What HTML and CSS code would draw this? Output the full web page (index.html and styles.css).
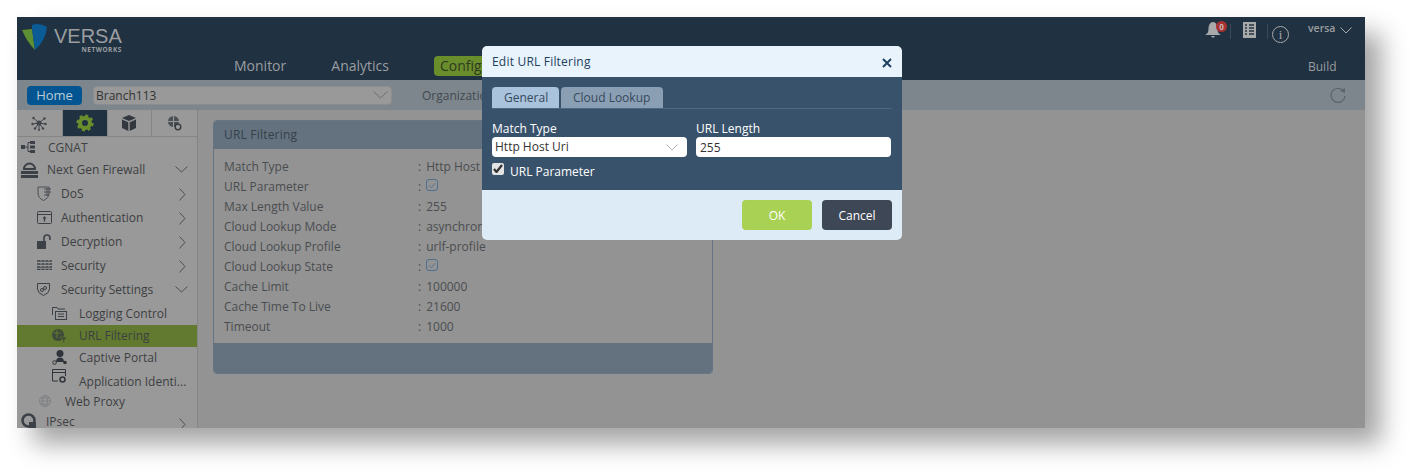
FILE: index.html
```html
<!DOCTYPE html>
<html lang="en">

<head>
    <meta charset="UTF-8">
    <title>Edit URL Filtering</title>
    <link rel="stylesheet" href="styles.css">
</head>

<body>
    <div class="window">
        <header class="topbar">
            <div class="logo">
                <svg width="26" height="29" viewBox="0 0 26 29">
                    <path d="M0 8 L10 7 L13 28 Q5 20 0 8 Z" fill="#5f8f33"/>
                    <path d="M10 3 Q17 0 25 5 Q24 18 13 28 L10 7 Z" fill="#0b5c96"/>
                </svg>
                <div class="logo-text">
                    <span class="logo-name">VERSA</span>
                    <span class="logo-sub">NETWORKS</span>
                </div>
            </div>
            <nav class="mainnav">
                <a>Monitor</a>
                <a>Analytics</a>
                <a class="active">Configuration</a>
            </nav>
            <div class="topright">
                <div class="topicons">
                    <span class="bell">
                        <svg width="16" height="17" viewBox="0 0 16 17"><path d="M8 0 C11.500 0 12.500 4 12.500 7 C12.500 10 13.500 12 16 13 L0 13 C2.500 12 3.500 10 3.500 7 C3.500 4 4.500 0 8 0 Z M6 14 L10 14 Q8 17.500 6 14 Z" fill="#a7a9ab"/></svg>
                        <b class="badge">0</b>
                    </span>
                    <i class="sep"></i>
                    <svg class="listicon" width="13" height="16" viewBox="0 0 13 16"><rect width="13" height="16" fill="#a7a9ab"/><path d="M2 3H4M6 3H11M2 6H4M6 6H11M2 9H4M6 9H11M2 12H4M6 12H11" stroke="#27343f" stroke-width="1.300"/></svg>
                    <i class="sep"></i>
                    <span class="infoicon">i</span>
                    <span class="user">versa</span>
                    <svg class="userchev" width="12" height="7" viewBox="0 0 12 7"><path d="M0.500 0.500 L6 6 L11.500 0.500" fill="none" stroke="#a7a9ab"/></svg>
                </div>
                <div class="build">Build</div>
            </div>
        </header>

        <div class="toolbar">
            <button class="home">Home</button>
            <div class="branch">
                <span>Branch113</span>
                <svg width="15" height="8" viewBox="0 0 15 8"><path d="M0.500 0.500 L7.500 7 L14.500 0.500" fill="none" stroke="#6b6f73"/></svg>
            </div>
            <span class="org">Organization</span>
            <svg class="refresh" width="16" height="16" viewBox="0 0 16 16"><path d="M12.500 3 A7 7 0 1 0 15 9" fill="none" stroke="#5c6369" stroke-width="1.200"/><path d="M10 4 L15 1 L15 6 Z" fill="#5c6369"/></svg>
        </div>

        <div class="content">
            <aside class="sidebar">
                <div class="sidetabs">
                    <div class="sidetab">
                        <svg width="16" height="16" viewBox="0 0 16 16"><path d="M8 8L2.500 3M8 8L13.500 3.500M8 8L1.500 9M8 8L14.500 9M8 8L4 13.500M8 8L12 13.500M8 8L8 15" stroke="#40464b"/><g fill="#40464b"><circle cx="8" cy="8" r="2.500"/><circle cx="2.500" cy="3" r="1.200"/><circle cx="13.500" cy="3.500" r="1.200"/><circle cx="1.500" cy="9" r="1.200"/><circle cx="14.500" cy="9" r="1.200"/><circle cx="4" cy="13.500" r="1.200"/><circle cx="12" cy="13.500" r="1.200"/><circle cx="8" cy="15" r="1"/></g></svg>
                    </div>
                    <div class="sidetab current">
                        <svg width="18" height="18" viewBox="0 0 18 18"><circle cx="9" cy="9" r="5" fill="none" stroke="#6b8e2d" stroke-width="4"/><circle cx="9" cy="9" r="7.400" fill="none" stroke="#6b8e2d" stroke-width="2.400" stroke-dasharray="3 2.800"/></svg>
                    </div>
                    <div class="sidetab">
                        <svg width="14" height="16" viewBox="0 0 14 16"><path d="M7 0L14 3L7 6L0 3ZM0 4.500L6.300 7.200V16L0 13ZM14 4.500L7.700 7.200V16L14 13Z" fill="#32383d"/></svg>
                    </div>
                    <div class="sidetab">
                        <svg width="15" height="16" viewBox="0 0 15 16"><circle cx="6.500" cy="6.500" r="5.500" fill="#4a5055"/><path d="M1 6.500H12M6.500 1V12" stroke="#999"/><circle cx="11" cy="12" r="2.800" fill="#999" stroke="#32383d" stroke-width="1.300"/></svg>
                    </div>
                </div>
                <ul class="tree">
                    <li class="row lvl0 h-cgnat">
                        <svg class="ic" width="15" height="14" viewBox="0 0 15 14"><path d="M0 5H4V9H0ZM9 1H14V4H9ZM9 5.500H14V8.500H9ZM9 10H14V13H9Z" fill="#3b4147"/><path d="M4 7H7M7 2.500V11.500H9M7 2.500H9" stroke="#3b4147" fill="none"/></svg>
                        <span class="label gap-cgnat">CGNAT</span>
                    </li>
                    <li class="row lvl0 h-ngf">
                        <svg class="ic" width="17" height="17" viewBox="0 0 17 17"><path d="M3 8 A5.500 5.500 0 0 1 14 8 Z" fill="none" stroke="#3b4147" stroke-width="2"/><path d="M0 10H17V13H0ZM0 14H17V17H0Z" fill="#3b4147"/></svg>
                        <span class="label gap-ngf">Next Gen Firewall</span>
                        <svg class="chev-down" width="13" height="7" viewBox="0 0 13 7"><path d="M0.500 0.500L6.500 6L12.500 0.500" fill="none" stroke="#4a4f54"/></svg>
                    </li>
                    <li class="row lvl1">
                        <svg class="ic" width="15" height="15" viewBox="0 0 15 15"><path d="M1 1H12V7Q12 12 6.500 14.500Q1 12 1 7Z" fill="none" stroke="#4a4f54"/><path d="M7 3H14M7 6H14M7 9H12M10 2V10" stroke="#4a4f54" fill="none"/></svg>
                        <span class="label">DoS</span>
                        <svg class="chev-right" width="7" height="13" viewBox="0 0 7 13"><path d="M0.500 0.500L6 6.500L0.500 12.500" fill="none" stroke="#4a4f54"/></svg>
                    </li>
                    <li class="row lvl1">
                        <svg class="ic" width="15" height="13" viewBox="0 0 15 13"><rect x="0.500" y="0.500" width="14" height="12" rx="1" fill="none" stroke="#3b4147"/><path d="M0.500 3.500H14.500" stroke="#3b4147"/><path d="M7.500 5L9.500 7.500H8.200V10.500H6.800V7.500H5.500Z" fill="#3b4147"/></svg>
                        <span class="label">Authentication</span>
                        <svg class="chev-right" width="7" height="13" viewBox="0 0 7 13"><path d="M0.500 0.500L6 6.500L0.500 12.500" fill="none" stroke="#4a4f54"/></svg>
                    </li>
                    <li class="row lvl1">
                        <svg class="ic" width="15" height="15" viewBox="0 0 15 15"><rect x="0" y="7" width="9" height="8" fill="#3b4147"/><path d="M7 7V4A3 3 0 0 1 13 4V6" fill="none" stroke="#3b4147" stroke-width="1.600"/></svg>
                        <span class="label">Decryption</span>
                        <svg class="chev-right" width="7" height="13" viewBox="0 0 7 13"><path d="M0.500 0.500L6 6.500L0.500 12.500" fill="none" stroke="#4a4f54"/></svg>
                    </li>
                    <li class="row lvl1">
                        <svg class="ic" width="15" height="10" viewBox="0 0 15 10"><path d="M0 1H15M0 4H15M0 7H15M0 9.500H15" stroke="#3b4147" stroke-width="1.500"/><path d="M4 0V10M8 0V10M12 0V10" stroke="#999" stroke-dasharray="1.500 1.500"/></svg>
                        <span class="label">Security</span>
                        <svg class="chev-right" width="7" height="13" viewBox="0 0 7 13"><path d="M0.500 0.500L6 6.500L0.500 12.500" fill="none" stroke="#4a4f54"/></svg>
                    </li>
                    <li class="row lvl1">
                        <svg class="ic" width="13" height="14" viewBox="0 0 13 14"><path d="M0.500 1.500H12.500V7Q12.500 11 6.500 13.500Q0.500 11 0.500 7Z" fill="none" stroke="#3b4147"/><circle cx="5" cy="8" r="1.500" fill="none" stroke="#3b4147"/><circle cx="8" cy="6" r="1.500" fill="none" stroke="#3b4147"/></svg>
                        <span class="label gap-sec">Security Settings</span>
                        <svg class="chev-down" width="13" height="7" viewBox="0 0 13 7"><path d="M0.500 0.500L6.500 6L12.500 0.500" fill="none" stroke="#4a4f54"/></svg>
                    </li>
                    <li class="row lvl2 r-log">
                        <svg class="ic" width="15" height="14" viewBox="0 0 15 14"><path d="M0.500 9V1.500H5L6 3H13" fill="none" stroke="#3b4147"/><rect x="3.500" y="5.500" width="11" height="8" fill="none" stroke="#3b4147"/><path d="M6 8H12M6 10.500H12" stroke="#3b4147"/></svg>
                        <span class="label">Logging Control</span>
                    </li>
                    <li class="row lvl2 selected">
                        <svg class="ic" width="15" height="14" viewBox="0 0 15 14"><circle cx="6" cy="6" r="6" fill="#3f4a3a"/><path d="M2 4H9M5 1V9" stroke="#617a2f"/><path d="M8 8H15L12.500 11V14H11V11Z" fill="#3f4a3a" stroke="#617a2f" stroke-width="0.600"/></svg>
                        <span class="label">URL Filtering</span>
                    </li>
                    <li class="row lvl2 r-captive">
                        <svg class="ic" width="15" height="15" viewBox="0 0 15 15"><circle cx="8" cy="3.500" r="3.500" fill="#2f353a"/><path d="M4 12Q4 7.500 8 7.500Q12 7.500 12 12Z" fill="#2f353a"/><circle cx="2.500" cy="12.500" r="1.800" fill="none" stroke="#2f353a"/><circle cx="13" cy="12.500" r="1.800" fill="#2f353a"/></svg>
                        <span class="label">Captive Portal</span>
                    </li>
                    <li class="row lvl2 r-app">
                        <svg class="ic ic-up" width="14" height="14" viewBox="0 0 14 14"><path d="M0.500 12V0.500H13.500V7M0.500 3.500H13.500M0.500 12H6" fill="none" stroke="#2f353a"/><circle cx="10.500" cy="10.500" r="2.500" fill="none" stroke="#2f353a" stroke-width="1.500"/></svg>
                        <span class="label">Application Identi...</span>
                    </li>
                    <li class="row lvlw">
                        <svg class="ic" width="12" height="12" viewBox="0 0 12 12"><g fill="none" stroke="#808285"><circle cx="6" cy="6" r="5.500"/><ellipse cx="6" cy="6" rx="2.500" ry="5.500"/><path d="M0.500 6H11.500M1.500 3H10.500M1.500 9H10.500"/></g></svg>
                        <span class="label">Web Proxy</span>
                    </li>
                    <li class="row lvl0 r-ipsec">
                        <svg class="ic" width="16" height="16" viewBox="0 0 16 16"><circle cx="7.500" cy="7.500" r="6" fill="none" stroke="#3b4147" stroke-width="2.500"/><rect x="8" y="9" width="7" height="7" fill="#3b4147"/></svg>
                        <span class="label gap-ipsec">IPsec</span>
                        <svg class="chev-right" width="7" height="13" viewBox="0 0 7 13"><path d="M0.500 0.500L6 6.500L0.500 12.500" fill="none" stroke="#4a4f54"/></svg>
                    </li>
                </ul>
            </aside>

            <main class="main">
                <section class="panel">
                    <h3 class="panel-head">URL Filtering</h3>
                    <dl class="panel-body">
                        <div class="kv"><dt>Match Type</dt><dd>Http Host Uri</dd></div>
                        <div class="kv"><dt>URL Parameter</dt><dd><span class="tick"><svg width="11" height="9" viewBox="0 0 11 9"><path d="M2 4.500L4.500 7L9 2" fill="none" stroke="#4d7199"/></svg></span></dd></div>
                        <div class="kv"><dt>Max Length Value</dt><dd>255</dd></div>
                        <div class="kv"><dt>Cloud Lookup Mode</dt><dd>asynchronous</dd></div>
                        <div class="kv"><dt>Cloud Lookup Profile</dt><dd>urlf-profile</dd></div>
                        <div class="kv"><dt>Cloud Lookup State</dt><dd><span class="tick"><svg width="11" height="9" viewBox="0 0 11 9"><path d="M2 4.500L4.500 7L9 2" fill="none" stroke="#4d7199"/></svg></span></dd></div>
                        <div class="kv"><dt>Cache Limit</dt><dd>100000</dd></div>
                        <div class="kv"><dt>Cache Time To Live</dt><dd>21600</dd></div>
                        <div class="kv"><dt>Timeout</dt><dd>1000</dd></div>
                    </dl>
                    <div class="panel-foot"></div>
                </section>
            </main>
        </div>

        <div class="modal">
            <div class="modal-head">
                <span>Edit URL Filtering</span>
                <svg width="10" height="10" viewBox="0 0 10 10"><path d="M1 1L9 9M9 1L1 9" stroke="#1f3f5c" stroke-width="2"/></svg>
            </div>
            <div class="modal-body">
                <div class="tabs">
                    <span class="tab on">General</span>
                    <span class="tab">Cloud Lookup</span>
                </div>
                <div class="fields">
                    <div class="field">
                        <label>Match Type</label>
                        <div class="input select">
                            <span>Http Host Uri</span>
                            <svg width="12" height="7" viewBox="0 0 12 7"><path d="M0.500 0.500L6 6L11.500 0.500" fill="none" stroke="#b5b5b5"/></svg>
                        </div>
                    </div>
                    <div class="field">
                        <label>URL Length</label>
                        <div class="input length">255</div>
                    </div>
                </div>
                <div class="checkrow">
                    <span class="checkbox"><svg width="10" height="9" viewBox="0 0 10 9"><path d="M1 5L3.500 8L9 1" fill="none" stroke="#333" stroke-width="2.200"/></svg></span>
                    <span>URL Parameter</span>
                </div>
            </div>
            <div class="modal-foot">
                <button class="btn ok">OK</button>
                <button class="btn cancel">Cancel</button>
            </div>
        </div>
    </div>
</body>

</html>
```

FILE: styles.css
```css
* {
    margin: 0;
    padding: 0;
    box-sizing: border-box;
}

body {
    background: #fff;
    height: 476px;
    overflow: hidden;
    padding: 17px 48px 48px 17px;
    font-family: "Open Sans", sans-serif;
    font-size: 12px;
    color: #3c4044;
}

.window {
    position: relative;
    width: 1348px;
    height: 411px;
    display: flex;
    flex-direction: column;
    background: #939393;
    box-shadow: 16px 16px 24px rgba(0, 0, 0, 0.36);
}

/* top bar */
.topbar {
    height: 63px;
    background: #203141;
    display: flex;
    justify-content: space-between;
    flex: none;
}

.logo {
    width: 217px;
    display: flex;
    align-items: flex-start;
    padding: 5px 0 0 5px;
}

.logo-text {
    display: flex;
    flex-direction: column;
    align-items: flex-end;
    margin-left: 6px;
    color: #9a9da0;
}

.logo-name {
    font-family: "Liberation Sans", sans-serif;
    font-size: 20px;
    line-height: 22px;
    margin-top: 3px;
}

.logo-sub {
    font-size: 6.5px;
    font-weight: 700;
    line-height: 6px;
    letter-spacing: 0.5px;
    margin-top: 0;
}

.mainnav {
    flex: 1;
    display: flex;
    align-items: flex-end;
    gap: 45px;
    padding-bottom: 4px;
    font-size: 14px;
    color: #9a9da0;
}

.mainnav a {
    line-height: 20px;
}

.mainnav .active {
    background: #6b8e2d;
    color: #2d3a20;
    border-radius: 4px;
    padding: 0 6px;
}

.topright {
    width: 160px;
    display: flex;
    flex-direction: column;
    justify-content: space-between;
    padding-bottom: 4px;
}

.topicons {
    display: flex;
    align-items: flex-start;
    padding-top: 5px;
    height: 30px;
}

.bell {
    position: relative;
    height: 17px;
}

.badge {
    position: absolute;
    top: -1px;
    left: 11px;
    width: 11px;
    height: 11px;
    border-radius: 50%;
    background: #a83232;
    color: #c9b5b5;
    font-size: 8px;
    line-height: 11px;
    text-align: center;
}

.sep {
    width: 1px;
    height: 15px;
    background: #3a4a58;
    margin: 2px 0 0 9px;
}

.listicon {
    margin-left: 12px;
}

.listicon + .sep {
    margin-left: 11px;
}

.infoicon {
    width: 17px;
    height: 17px;
    margin: 4px 0 0 4px;
    border: 1px solid #a7a9ab;
    border-radius: 50%;
    color: #a7a9ab;
    font-family: "Liberation Serif", serif;
    font-size: 13px;
    line-height: 15px;
    text-align: center;
}

.user {
    margin-left: 19px;
    font-size: 10.5px;
    font-weight: 600;
    line-height: 13px;
    color: #9a9da0;
}

.userchev {
    margin: 5px 0 0 5px;
}

.build {
    padding-left: 103px;
    font-size: 12px;
    line-height: 18px;
    color: #9a9da0;
}

/* toolbar */
.toolbar {
    height: 30px;
    flex: none;
    background: #7d868d;
    display: flex;
    align-items: center;
    padding-left: 10px;
    position: relative;
}

.home {
    width: 55px;
    height: 19px;
    background: #035591;
    color: #b9cbd8;
    border: none;
    border-radius: 4px;
    font-family: inherit;
    font-size: 13px;
}

.branch {
    width: 299px;
    height: 19px;
    margin-left: 11px;
    padding: 0 3px 0 2px;
    background: #999;
    border: 1px solid #8a8d90;
    border-radius: 4px;
    display: flex;
    align-items: center;
    justify-content: space-between;
    font-size: 12px;
    color: #333;
}

.org {
    margin-left: 30px;
    color: #43494f;
}

.refresh {
    margin-left: auto;
    margin-right: 19px;
}

/* sidebar */
.content {
    flex: 1;
    display: flex;
    min-height: 0;
}

.sidebar {
    width: 181px;
    flex: none;
    background: #999;
    border-right: 1px solid #858585;
    overflow: hidden;
}

.sidetabs {
    height: 27px;
    display: flex;
    border-bottom: 1px solid #858585;
}

.sidetab {
    width: 45px;
    display: flex;
    align-items: center;
    justify-content: center;
    border-right: 1px solid #858585;
}

.sidetab:first-child {
    width: 46px;
}

.sidetab:last-child {
    border-right: none;
}

.sidetab.current {
    background: #203141;
}

.tree {
    list-style: none;
}

.row {
    position: relative;
    height: 24px;
    display: flex;
    align-items: center;
    font-size: 12px;
    color: #3d3f42;
}

.ic {
    flex: none;
}

.label {
    white-space: nowrap;
}

.lvl0 {
    padding-left: 4px;
}

.h-cgnat {
    height: 20px;
}

.gap-cgnat {
    margin-left: 12px;
}

.gap-ngf {
    margin-left: 9px;
}

.gap-ipsec {
    margin-left: 9px;
}

.lvl1 {
    padding-left: 20px;
}

.lvl1 .label {
    position: absolute;
    left: 44px;
}

.lvl2 {
    height: 22px;
    padding-left: 35px;
}

.lvl2 .label {
    position: absolute;
    left: 62px;
}

.r-log {
    height: 24px;
}

.selected {
    background: #617a2f;
}

.selected .label {
    top: 2px;
}

.r-captive {
    height: 20px;
}

.r-app {
    height: 24px;
}

.r-app .label {
    top: 6px;
}

.ic-up {
    margin-top: -6px;
}

.lvlw {
    height: 20px;
    padding-left: 22px;
}

.lvlw .label {
    position: absolute;
    left: 48px;
}

.r-ipsec {
    height: 20px;
}

.chev-down {
    position: absolute;
    right: 9px;
    top: 9px;
}

.chev-right {
    position: absolute;
    right: 11px;
    top: 7px;
}

/* panel */
.main {
    flex: 1;
    padding: 10px 15px;
}

.panel {
    width: 500px;
    height: 254px;
    display: flex;
    flex-direction: column;
    border: 1px solid #657584;
    border-radius: 4px;
    overflow: hidden;
}

.panel-head {
    height: 28px;
    flex: none;
    padding-left: 10px;
    background: #64727f;
    font-size: 12px;
    font-weight: 400;
    letter-spacing: 0.2px;
    line-height: 28px;
    color: #35404a;
}

.panel-body {
    flex: 1;
    padding: 8px 0 0 10px;
}

.kv {
    display: flex;
    height: 20px;
    line-height: 20px;
    color: #4a4d50;
}

.kv dt {
    width: 194px;
}

.kv dd::before {
    content: ":";
    margin-right: 5px;
}

.kv dd {
    display: flex;
}

.tick {
    width: 12px;
    height: 12px;
    margin-top: 2px;
    border: 1px solid #4d6f92;
    border-radius: 3px;
    display: flex;
    align-items: center;
    justify-content: center;
}

.panel-foot {
    height: 30px;
    flex: none;
    background: #64727f;
}

/* modal */
.modal {
    position: absolute;
    top: 29px;
    left: 465px;
    width: 420px;
    height: 194px;
    display: flex;
    flex-direction: column;
    border-radius: 5px;
    overflow: hidden;
}

.modal-head {
    height: 31px;
    flex: none;
    padding: 0 10px;
    background: #e8f3fc;
    display: flex;
    align-items: center;
    justify-content: space-between;
    letter-spacing: 0.2px;
    color: #1f3f5c;
}

.modal-head svg {
    margin-top: 2px;
}

.modal-body {
    height: 113px;
    flex: none;
    padding: 10px 10px 0;
    background: #39526b;
    color: #fff;
}

.tabs {
    height: 22px;
    display: flex;
    gap: 2px;
    border-bottom: 1px solid #4b6a84;
}

.tab {
    width: 102px;
    padding-left: 12px;
    background: #8b9fb4;
    border-radius: 4px 4px 0 0;
    color: #37495c;
    line-height: 22px;
}

.tab.on {
    width: 67px;
    background: #a9c3dc;
}

.fields {
    display: flex;
    gap: 9px;
    margin-top: 13px;
}

.field {
    width: 195px;
    display: flex;
    flex-direction: column;
}

.field label {
    line-height: 14px;
}

.input {
    height: 20px;
    margin-top: 1px;
    padding: 0 3px;
    background: #fff;
    border-radius: 4px;
    color: #333;
    line-height: 20px;
}

.length {
    padding-top: 1px;
    padding-left: 4px;
}

.select {
    display: flex;
    align-items: center;
    justify-content: space-between;
}

.select svg {
    margin-right: 6px;
}

.checkrow {
    display: flex;
    align-items: center;
    gap: 6px;
    margin-top: 6px;
}

.checkbox {
    width: 12px;
    height: 12px;
    margin-top: -6px;
    background: #e3e3e3;
    border-radius: 2px;
    display: flex;
    align-items: center;
    justify-content: center;
}

.modal-foot {
    flex: 1;
    padding-right: 10px;
    background: #dcebf6;
    display: flex;
    align-items: center;
    justify-content: flex-end;
    gap: 10px;
}

.btn {
    width: 70px;
    height: 30px;
    border: none;
    border-radius: 4px;
    color: #fff;
    font-family: inherit;
    font-size: 12px;
}

.ok {
    background: #a9d154;
}

.cancel {
    background: #3d4756;
}
```
